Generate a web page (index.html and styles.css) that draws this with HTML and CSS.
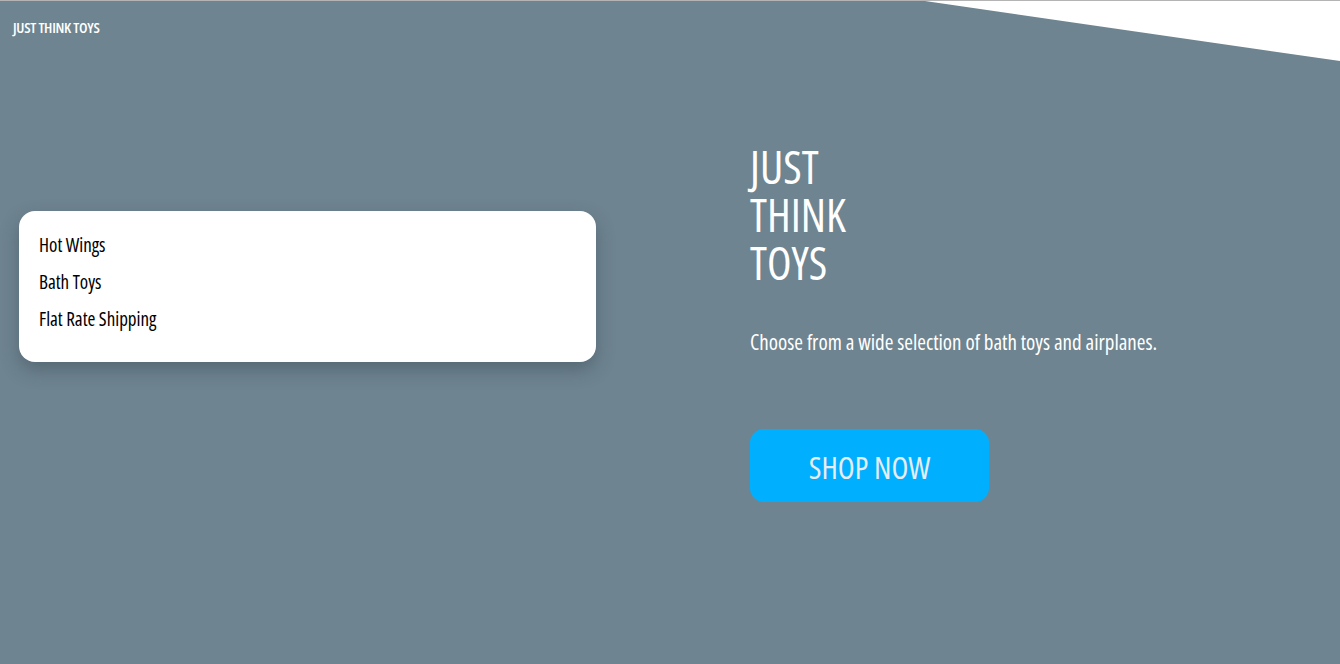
FILE: index.html
```html
<!DOCTYPE html>
<html lang="en">
<head>
<meta charset="utf-8">
<title>Just Think Toys</title>
<link rel="stylesheet" href="styles.css">
</head>
<body>
<div class="page">
  <header class="topbar">
    <span class="brand">JUST THINK TOYS</span>
  </header>
  <main class="hero">
    <section class="col-left">
      <ul class="card">
        <li>Hot Wings</li>
        <li>Bath Toys</li>
        <li>Flat Rate Shipping</li>
      </ul>
    </section>
    <section class="col-right">
      <h1 class="title"><span class="title-line">JUST</span><span class="title-line">THINK</span><span class="title-line">TOYS</span></h1>
      <p class="lead">Choose from a wide selection of bath toys and airplanes.</p>
      <a class="btn" href="#">SHOP NOW</a>
    </section>
  </main>
</div>
</body>
</html>
```
FILE: styles.css
```css
html, body {
  margin: 0;
  padding: 0;
  height: 100%;
  background: #ffffff;
}
body {
  font-family: "Open Sans", "Liberation Sans", sans-serif;
  font-stretch: 75%;
  border-top: 1px solid #b4b4b4;
  box-sizing: border-box;
  overflow: hidden;
}
.page {
  background: #6e8490;
  min-height: 663px;
  clip-path: polygon(0 0, 925px 0, 100% 60px, 100% 100%, 0 100%);
  display: flex;
  flex-direction: column;
}
.topbar {
  padding: 15px 13px 0;
  height: 40px;
  box-sizing: border-box;
}
.brand {
  color: #ffffff;
  font-size: 15px;
  font-weight: 600;
  letter-spacing: -0.3px;
}
.hero {
  display: flex;
  align-items: flex-start;
}
.col-left {
  width: 750px;
  padding: 170px 0 0 19px;
  box-sizing: border-box;
}
.card {
  list-style: none;
  margin: 0;
  width: 577px;
  box-sizing: border-box;
  padding: 16px 20px 24px;
  background: #ffffff;
  border-radius: 16px;
  box-shadow: 0 8px 18px rgba(40, 55, 65, 0.35);
}
.card li {
  color: #000000;
  font-size: 19px;
  line-height: 37px;
}
.col-right {
  padding-top: 102px;
}
.title {
  margin: 0;
  color: #ffffff;
  font-size: 45px;
  font-weight: 400;
  display: flex;
  flex-direction: column;
}
.title-line {
  display: block;
  height: 48px;
  line-height: 48px;
}
.lead {
  margin: 40px 0 0;
  color: #ffffff;
  font-size: 21px;
  line-height: 30px;
}
.btn {
  display: flex;
  align-items: center;
  justify-content: center;
  margin-top: 72px;
  width: 239px;
  height: 73px;
  padding-top: 3px;
  box-sizing: border-box;
  border-radius: 14px;
  background: #00b0ff;
  color: #e6ecef;
  font-size: 31px;
  text-decoration: none;
}
```
